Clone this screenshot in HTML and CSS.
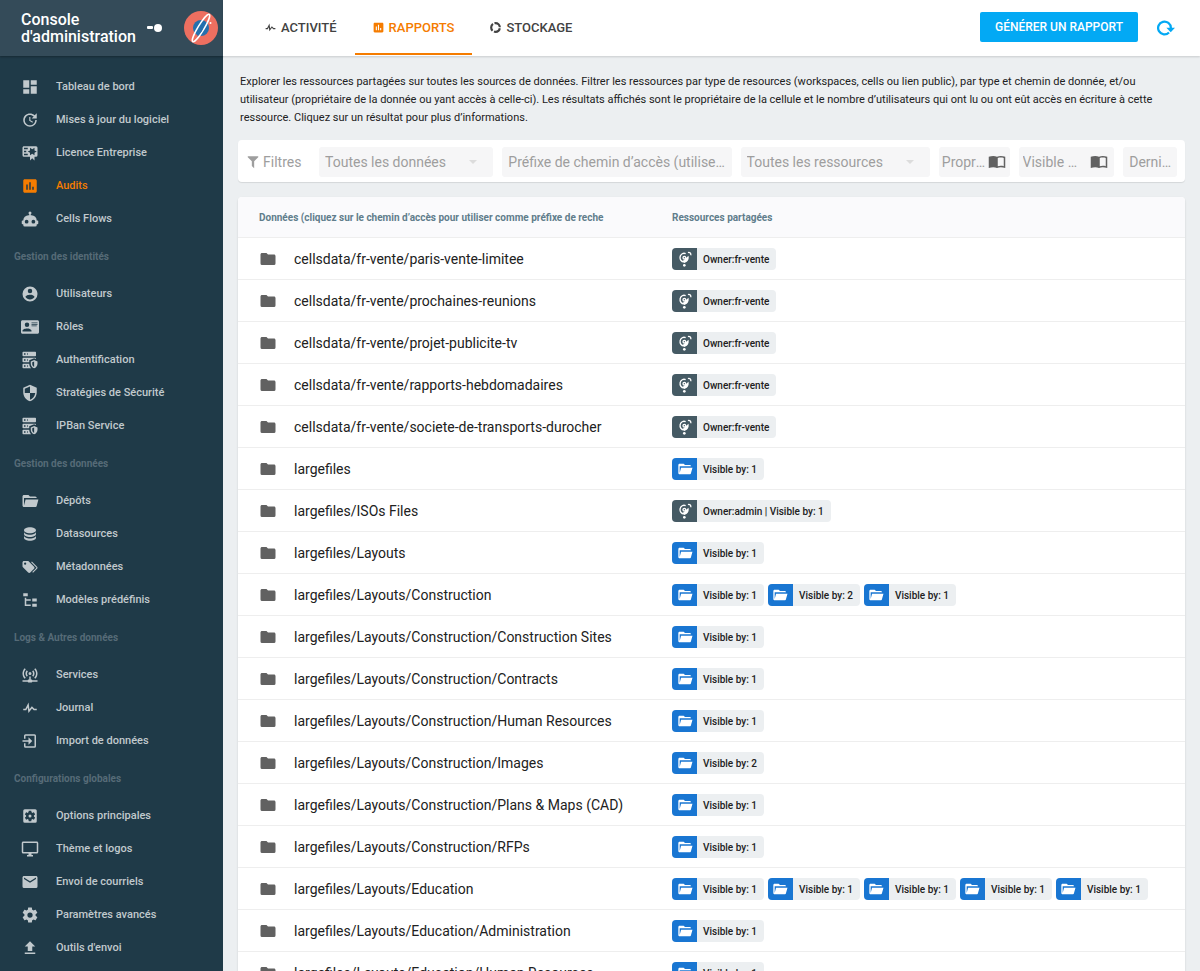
FILE: index.html
```html
<!doctype html>
<html lang="fr">
    <head>
        <meta charset="UTF-8" />
        <meta name="viewport" content="width=device-width, initial-scale=1.0" />
        <title>Console d'administration</title>
        <link rel="stylesheet" href="styles.css">
    </head>
    <body>
        <svg class="sprite" aria-hidden="true">
            <symbol id="i-dashboard" viewBox="0 0 24 24"><path d="M13,3V9H21V3M13,21H21V11H13M3,21H11V15H3M3,13H11V3H3V13Z" /></symbol>
            <symbol id="i-update" viewBox="0 0 24 24"><path d="M21,10.12H14.22L16.96,7.3C14.23,4.6 9.81,4.5 7.08,7.2C4.35,9.91 4.35,14.28 7.08,17C9.81,19.7 14.23,19.7 16.96,17C18.32,15.65 19,14.08 19,12.1H21C21,14.08 20.12,16.65 18.36,18.39C14.85,21.87 9.15,21.87 5.64,18.39C2.14,14.92 2.11,9.28 5.62,5.81C9.13,2.34 14.76,2.34 18.27,5.81L21,3V10.12M12.5,8V12.25L16,14.33L15.28,15.54L11,13V8H12.5Z" /></symbol>
            <symbol id="i-licence" viewBox="0 0 24 24"><path d="M4,3C2.89,3 2,3.89 2,5V15A2,2 0 0,0 4,17H12V22L15,19L18,22V17H20A2,2 0 0,0 22,15V5A2,2 0 0,0 20,3H4M12,5L15,7L18,5V8.5L21,10L18,11.5V15L15,13L12,15V11.5L9,10L12,8.5V5M4,5H9V7H4V5M4,9H7V11H4V9M4,13H9V15H4V13Z" /></symbol>
            <symbol id="i-chart" viewBox="0 0 24 24"><path d="M19,3H5C3.9,3 3,3.9 3,5V19C3,20.1 3.9,21 5,21H19C20.1,21 21,20.1 21,19V5C21,3.9 20.1,3 19,3M9,17H7V10H9V17M13,17H11V7H13V17M17,17H15V13H17V17Z" /></symbol>
            <symbol id="i-robot" viewBox="0 0 24 24"><path d="M12,2A2,2 0 0,1 14,4C14,4.74 13.6,5.39 13,5.73V7H14A7,7 0 0,1 21,14H22A1,1 0 0,1 23,15V18A1,1 0 0,1 22,19H21V20A2,2 0 0,1 19,22H5A2,2 0 0,1 3,20V19H2A1,1 0 0,1 1,18V15A1,1 0 0,1 2,14H3A7,7 0 0,1 10,7H11V5.73C10.4,5.39 10,4.74 10,4A2,2 0 0,1 12,2M7.5,13A2.5,2.5 0 0,0 5,15.5A2.5,2.5 0 0,0 7.5,18A2.5,2.5 0 0,0 10,15.5A2.5,2.5 0 0,0 7.5,13M16.5,13A2.5,2.5 0 0,0 14,15.5A2.5,2.5 0 0,0 16.5,18A2.5,2.5 0 0,0 19,15.5A2.5,2.5 0 0,0 16.5,13Z" /></symbol>
            <symbol id="i-user" viewBox="0 0 24 24"><path d="M12,19.2C9.5,19.2 7.29,17.92 6,16C6.03,14 10,12.9 12,12.9C14,12.9 17.97,14 18,16C16.71,17.92 14.5,19.2 12,19.2M12,5A3,3 0 0,1 15,8A3,3 0 0,1 12,11A3,3 0 0,1 9,8A3,3 0 0,1 12,5M12,2A10,10 0 0,0 2,12A10,10 0 0,0 12,22A10,10 0 0,0 22,12C22,6.47 17.5,2 12,2Z" /></symbol>
            <symbol id="i-card" viewBox="0 0 24 24"><path d="M2,3H22C23.05,3 24,3.95 24,5V19C24,20.05 23.05,21 22,21H2C0.95,21 0,20.05 0,19V5C0,3.95 0.95,3 2,3M14,6V7H22V6H14M14,8V9H22V8H14M14,10V11H21V10H14M8,13.91C6,13.91 2,15 2,17V18H14V17C14,15 10,13.91 8,13.91M8,6A3,3 0 0,0 5,9A3,3 0 0,0 8,12A3,3 0 0,0 11,9A3,3 0 0,0 8,6Z" /></symbol>
            <symbol id="i-server" viewBox="0 0 24 24"><path d="M3,1H19A1,1 0 0,1 20,2V6A1,1 0 0,1 19,7H3A1,1 0 0,1 2,6V2A1,1 0 0,1 3,1M3,9H19A1,1 0 0,1 20,10V10.67L17.5,9.56L11,12.44V15H3A1,1 0 0,1 2,14V10A1,1 0 0,1 3,9M3,17H11C11.06,19.25 12,21.4 13.46,23H3A1,1 0 0,1 2,22V18A1,1 0 0,1 3,17M8,5H9V3H8V5M8,13H9V11H8V13M8,21H9V19H8V21M4,3V5H6V3H4M4,11V13H6V11H4M4,19V21H6V19H4M17.5,12L22,14V17C22,19.78 20.08,22.37 17.5,23C14.92,22.37 13,19.78 13,17V14L17.5,12M17.5,13.94L15,15.06V17.72C15,19.26 16.07,20.7 17.5,21.06V13.94Z" /></symbol>
            <symbol id="i-shield" viewBox="0 0 24 24"><path d="M12,12H19C18.47,16.11 15.72,19.78 12,20.92V12H5V6.3L12,3.19M12,1L3,5V11C3,16.55 6.84,21.73 12,23C17.16,21.73 21,16.55 21,11V5L12,1Z" /></symbol>
            <symbol id="i-folder-open" viewBox="0 0 24 24"><path d="M19,20H4C2.89,20 2,19.1 2,18V6C2,4.89 2.89,4 4,4H10L12,6H19A2,2 0 0,1 21,8H4V18L6.14,10H23.21L20.93,18.5C20.7,19.37 19.92,20 19,20Z" /></symbol>
            <symbol id="i-database" viewBox="0 0 24 24"><path d="M12,3C7.58,3 4,4.79 4,7C4,9.21 7.58,11 12,11C16.42,11 20,9.21 20,7C20,4.79 16.42,3 12,3M4,9V12C4,14.21 7.58,16 12,16C16.42,16 20,14.21 20,12V9C20,11.21 16.42,13 12,13C7.58,13 4,11.21 4,9M4,14V17C4,19.21 7.58,21 12,21C16.42,21 20,19.21 20,17V14C20,16.21 16.42,18 12,18C7.58,18 4,16.21 4,14Z" /></symbol>
            <symbol id="i-tags" viewBox="0 0 24 24"><path d="M5.5,9A1.5,1.5 0 0,0 7,7.5A1.5,1.5 0 0,0 5.5,6A1.5,1.5 0 0,0 4,7.5A1.5,1.5 0 0,0 5.5,9M17.41,11.58C17.77,11.94 18,12.44 18,13C18,13.55 17.78,14.05 17.41,14.41L12.41,19.41C12.05,19.77 11.55,20 11,20C10.45,20 9.95,19.78 9.58,19.41L2.59,12.42C2.22,12.05 2,11.55 2,11V6C2,4.89 2.89,4 4,4H9C9.55,4 10.05,4.22 10.41,4.58L17.41,11.58M13.54,5.71L14.54,4.71L21.41,11.58C21.78,11.94 22,12.45 22,13C22,13.55 21.78,14.05 21.42,14.41L16.04,19.79L15.04,18.79L20.75,13L13.54,5.71Z" /></symbol>
            <symbol id="i-tree" viewBox="0 0 24 24"><path d="M3,3H9V7H3V3M15,10H21V14H15V10M15,17H21V21H15V17M13,13H7V18H13V20H5V9H7V11H13V13Z" /></symbol>
            <symbol id="i-network" viewBox="0 0 24 24"><path d="M4.93,2.93C3.12,4.74 2,7.24 2,10C2,12.76 3.12,15.26 4.93,17.07L6.34,15.66C4.89,14.22 4,12.22 4,10C4,7.79 4.89,5.78 6.34,4.34L4.93,2.93M19.07,2.93L17.66,4.34C19.11,5.78 20,7.79 20,10C20,12.22 19.11,14.22 17.66,15.66L19.07,17.07C20.88,15.26 22,12.76 22,10C22,7.24 20.88,4.74 19.07,2.93M7.76,5.76C6.67,6.85 6,8.35 6,10C6,11.65 6.67,13.15 7.76,14.24L9.17,12.83C8.45,12.11 8,11.11 8,10C8,8.89 8.45,7.89 9.17,7.17L7.76,5.76M16.24,5.76L14.83,7.17C15.55,7.89 16,8.89 16,10C16,11.11 15.55,12.11 14.83,12.83L16.24,14.24C17.33,13.15 18,11.65 18,10C18,8.35 17.33,6.85 16.24,5.76M12,8A2,2 0 0,0 10,10A2,2 0 0,0 12,12A2,2 0 0,0 14,10A2,2 0 0,0 12,8M11,14V18H10A1,1 0 0,0 9,19H2V21H9A1,1 0 0,0 10,22H14A1,1 0 0,0 15,21H22V19H15A1,1 0 0,0 14,18H13V14H11Z" /></symbol>
            <symbol id="i-pulse" viewBox="0 0 24 24"><path d="M3,13H5.79L10.1,4.79L11.28,13.75L14.5,9.66L17.83,13H21V15H17L14.67,12.67L9.92,18.73L8.94,11.31L7,15H3V13Z" /></symbol>
            <symbol id="i-import" viewBox="0 0 24 24"><path d="M19,3H6A2,2 0 0,0 4,5V9H6V5H18V19H6V15H4V19A2,2 0 0,0 6,21H18A2,2 0 0,0 20,19V5A2,2 0 0,0 18,3M10,17L15,12L10,7V11H2V13H10V17Z" /></symbol>
            <symbol id="i-options" viewBox="0 0 24 24"><path d="M19,3H5A2,2 0 0,0 3,5V19A2,2 0 0,0 5,21H19A2,2 0 0,0 21,19V5A2,2 0 0,0 19,3M17.25,12C17.25,12.23 17.23,12.46 17.2,12.68L18.68,13.84C18.81,13.95 18.85,14.13 18.76,14.29L17.36,16.71C17.27,16.86 17.09,16.92 16.93,16.86L15.19,16.16C14.83,16.44 14.43,16.67 14,16.85L13.74,18.7C13.72,18.87 13.57,19 13.4,19H10.6C10.43,19 10.28,18.87 10.26,18.7L10,16.85C9.57,16.67 9.17,16.44 8.81,16.16L7.07,16.86C6.91,16.92 6.73,16.86 6.64,16.71L5.24,14.29C5.15,14.13 5.19,13.95 5.32,13.84L6.8,12.68C6.77,12.46 6.75,12.23 6.75,12C6.75,11.77 6.77,11.54 6.8,11.32L5.32,10.16C5.19,10.05 5.15,9.86 5.24,9.71L6.64,7.29C6.73,7.13 6.91,7.07 7.07,7.13L8.81,7.84C9.17,7.56 9.57,7.32 10,7.15L10.26,5.29C10.28,5.13 10.43,5 10.6,5H13.4C13.57,5 13.72,5.13 13.74,5.29L14,7.15C14.43,7.32 14.83,7.56 15.19,7.84L16.93,7.13C17.09,7.07 17.27,7.13 17.36,7.29L18.76,9.71C18.85,9.86 18.81,10.05 18.68,10.16L17.2,11.32C17.23,11.54 17.25,11.77 17.25,12M12,10A2,2 0 0,0 10,12A2,2 0 0,0 12,14A2,2 0 0,0 14,12A2,2 0 0,0 12,10Z" /></symbol>
            <symbol id="i-monitor" viewBox="0 0 24 24"><path d="M21,16H3V4H21M21,2H3C1.89,2 1,2.89 1,4V16A2,2 0 0,0 3,18H10V20H8V22H16V20H14V18H21A2,2 0 0,0 23,16V4C23,2.89 22.1,2 21,2Z" /></symbol>
            <symbol id="i-mail" viewBox="0 0 24 24"><path d="M20,8L12,13L4,8V6L12,11L20,6M20,4H4C2.89,4 2,4.89 2,6V18A2,2 0 0,0 4,20H20A2,2 0 0,0 22,18V6C22,4.89 21.1,4 20,4Z" /></symbol>
            <symbol id="i-gear" viewBox="0 0 24 24"><path d="M12,15.5A3.5,3.5 0 0,1 8.5,12A3.5,3.5 0 0,1 12,8.5A3.5,3.5 0 0,1 15.5,12A3.5,3.5 0 0,1 12,15.5M19.43,12.97C19.47,12.65 19.5,12.33 19.5,12C19.5,11.67 19.47,11.34 19.43,11L21.54,9.37C21.73,9.22 21.78,8.95 21.66,8.73L19.66,5.27C19.54,5.05 19.27,4.96 19.05,5.05L16.56,6.05C16.04,5.66 15.5,5.32 14.87,5.07L14.5,2.42C14.46,2.18 14.25,2 14,2H10C9.75,2 9.54,2.18 9.5,2.42L9.13,5.07C8.5,5.32 7.96,5.66 7.44,6.05L4.95,5.05C4.73,4.96 4.46,5.05 4.34,5.27L2.34,8.73C2.21,8.95 2.27,9.22 2.46,9.37L4.57,11C4.53,11.34 4.5,11.67 4.5,12C4.5,12.33 4.53,12.65 4.57,12.97L2.46,14.63C2.27,14.78 2.21,15.05 2.34,15.27L4.34,18.73C4.46,18.95 4.73,19.03 4.95,18.95L7.44,17.94C7.96,18.34 8.5,18.68 9.13,18.93L9.5,21.58C9.54,21.82 9.75,22 10,22H14C14.25,22 14.46,21.82 14.5,21.58L14.87,18.93C15.5,18.67 16.04,18.34 16.56,17.94L19.05,18.95C19.27,19.03 19.54,18.95 19.66,18.73L21.66,15.27C21.78,15.05 21.73,14.78 21.54,14.63L19.43,12.97Z" /></symbol>
            <symbol id="i-upload" viewBox="0 0 24 24"><path d="M9,16V10H5L12,3L19,10H15V16H9M5,20V18H19V20H5Z" /></symbol>
            <symbol id="i-filter" viewBox="0 0 24 24"><path d="M3,2H21V4H20.92L14,10.92V22.91L10,18.91V10.91L3.09,4H3V2Z" /></symbol>
            <symbol id="i-folder" viewBox="0 0 24 24"><path d="M10,4H4C2.89,4 2,4.89 2,6V18A2,2 0 0,0 4,20H20A2,2 0 0,0 22,18V8C22,6.89 21.1,6 20,6H12L10,4Z" /></symbol>
            <symbol id="i-donut" viewBox="0 0 24 24"><circle cx="12" cy="12" r="8" fill="none" stroke="currentColor" stroke-width="4" pathLength="12" stroke-dasharray="3.3 0.7" stroke-dashoffset="-0.35" /></symbol>
            <symbol id="i-book" viewBox="0 0 24 24"><path d="M12,5C10.5,4.2 8.7,4 7,4C5,4 3,4.2 1,5V20C3,19.3 5,19 7,19C8.7,19 10.5,19.2 12,20C13.5,19.2 15.3,19 17,19C19,19 21,19.3 23,20V5C21,4.2 19,4 17,4C15.3,4 13.5,4.2 12,5M21,17.5C19.8,17.1 18.3,17 17,17C15.7,17 14.2,17.3 13,17.8V6.5C14.2,6.1 15.7,6 17,6C18.3,6 19.8,6.1 21,6.5V17.5Z" /></symbol>
            <symbol id="i-reload" viewBox="0 0 24 24">
                <path d="M16,18A8.5,8.5 0 1 1 18.5,12" fill="none" stroke="currentColor" stroke-width="3" />
                <path d="M12.5,11.5H24L18.3,17.5Z" />
            </symbol>
            <symbol id="i-cell" viewBox="0 0 24 24">
                <path d="M13,4A6,6.5 0 1 0 16.5,9L12,13" class="stroke" />
                <circle cx="11" cy="10" r="2" class="stroke" />
                <path d="M11,17.5L15,15L17,10L13,12L8,15Z" />
                <circle cx="11" cy="21.5" r="2" />
                <path d="M16.5,2.5A3,3 0 0 1 20.5,6.5" class="stroke" />
            </symbol>
        </svg>

        <div class="app">
            <aside class="sidebar">
                <header class="brand">
                    <h1>Console d'administration</h1>
                    <button class="pin" type="button" aria-label="Réduire le menu">
                        <svg viewBox="0 0 16 10"><rect x="0" y="3" width="6" height="3" rx="1" /><circle cx="11" cy="5" r="4" /></svg>
                    </button>
                    <svg class="logo" viewBox="0 0 34 34">
                        <circle cx="17" cy="17" r="17" fill="#ed6f60" />
                        <circle cx="17" cy="17" r="8" fill="#2470ae" />
                        <ellipse cx="17" cy="17" rx="3" ry="16" transform="rotate(31 17 17)" fill="none" stroke="#fff" stroke-width="1.5" />
                        <path d="M16,18L21,10L18,20L13,26Z" fill="#2470ae" />
                        <circle cx="26.5" cy="12" r="1" fill="#fff" />
                    </svg>
                </header>
                <nav class="menu">
                    <a href="#"><svg class="icon"><use href="#i-dashboard" /></svg>Tableau de bord</a>
                    <a href="#"><svg class="icon"><use href="#i-update" /></svg>Mises à jour du logiciel</a>
                    <a href="#"><svg class="icon"><use href="#i-licence" /></svg>Licence Entreprise</a>
                    <a href="#" class="active"><svg class="icon"><use href="#i-chart" /></svg>Audits</a>
                    <a href="#"><svg class="icon"><use href="#i-robot" /></svg>Cells Flows</a>
                    <h2>Gestion des identités</h2>
                    <a href="#"><svg class="icon"><use href="#i-user" /></svg>Utilisateurs</a>
                    <a href="#"><svg class="icon"><use href="#i-card" /></svg>Rôles</a>
                    <a href="#"><svg class="icon"><use href="#i-server" /></svg>Authentification</a>
                    <a href="#"><svg class="icon"><use href="#i-shield" /></svg>Stratégies de Sécurité</a>
                    <a href="#"><svg class="icon"><use href="#i-server" /></svg>IPBan Service</a>
                    <h2>Gestion des données</h2>
                    <a href="#"><svg class="icon"><use href="#i-folder-open" /></svg>Dépôts</a>
                    <a href="#"><svg class="icon"><use href="#i-database" /></svg>Datasources</a>
                    <a href="#"><svg class="icon"><use href="#i-tags" /></svg>Métadonnées</a>
                    <a href="#"><svg class="icon"><use href="#i-tree" /></svg>Modèles prédéfinis</a>
                    <h2>Logs &amp; Autres données</h2>
                    <a href="#"><svg class="icon"><use href="#i-network" /></svg>Services</a>
                    <a href="#"><svg class="icon"><use href="#i-pulse" /></svg>Journal</a>
                    <a href="#"><svg class="icon"><use href="#i-import" /></svg>Import de données</a>
                    <h2>Configurations globales</h2>
                    <a href="#"><svg class="icon"><use href="#i-options" /></svg>Options principales</a>
                    <a href="#"><svg class="icon"><use href="#i-monitor" /></svg>Thème et logos</a>
                    <a href="#"><svg class="icon"><use href="#i-mail" /></svg>Envoi de courriels</a>
                    <a href="#"><svg class="icon"><use href="#i-gear" /></svg>Paramètres avancés</a>
                    <a href="#"><svg class="icon"><use href="#i-upload" /></svg>Outils d'envoi</a>
                </nav>
            </aside>

            <div class="page">
                <header class="topbar">
                    <div class="tabs">
                        <button type="button" class="tab"><svg><use href="#i-pulse" /></svg>ACTIVITÉ</button>
                        <button type="button" class="tab selected"><svg><use href="#i-chart" /></svg>RAPPORTS</button>
                        <button type="button" class="tab"><svg><use href="#i-donut" /></svg>STOCKAGE</button>
                    </div>
                    <button type="button" class="generate">GÉNÉRER UN RAPPORT</button>
                    <button type="button" class="reload" aria-label="Recharger"><svg><use href="#i-reload" /></svg></button>
                </header>

                <main class="content">
                    <p class="intro">Explorer les ressources partagées sur toutes les sources de données. Filtrer les ressources par type de resources (workspaces, cells ou lien public), par type et chemin de donnée, et/ou utilisateur (propriétaire de la donnée ou yant accès à celle-ci). Les résultats affichés sont le propriétaire de la cellule et le nombre d’utilisateurs qui ont lu ou ont eût accès en écriture à cette ressource. Cliquez sur un résultat pour plus d’informations.</p>

                    <form class="filters">
                        <span class="filters-title"><svg><use href="#i-filter" /></svg>Filtres</span>
                        <div class="field data-type">
                            <select aria-label="Type de données"><option>Toutes les données</option></select>
                        </div>
                        <div class="field prefix">
                            <input type="text" aria-label="Préfixe de chemin d’accès" placeholder="Préfixe de chemin d’accès (utilisez la liste)" />
                        </div>
                        <div class="field resource-type">
                            <select aria-label="Type de ressources"><option>Toutes les ressources</option></select>
                        </div>
                        <div class="field owner">
                            <input type="text" aria-label="Propriétaire" placeholder="Propriétaire" />
                            <svg><use href="#i-book" /></svg>
                        </div>
                        <div class="field visible">
                            <input type="text" aria-label="Visible par" placeholder="Visible par l’utilisateur" />
                            <svg><use href="#i-book" /></svg>
                        </div>
                        <div class="field last">
                            <input type="text" aria-label="Dernière mise à jour" placeholder="Dernière mise à jour" />
                        </div>
                    </form>

                    <table class="report">
                        <thead>
                            <tr>
                                <th class="col-path">Données (cliquez sur le chemin d’accès pour utiliser comme préfixe de reche</th>
                                <th>Ressources partagées</th>
                            </tr>
                        </thead>
                        <tbody id="rows"></tbody>
                    </table>
                </main>
            </div>
        </div>

        <script>
            const rows = [
                ["cellsdata/fr-vente/paris-vente-limitee", ["Owner:fr-vente"]],
                ["cellsdata/fr-vente/prochaines-reunions", ["Owner:fr-vente"]],
                ["cellsdata/fr-vente/projet-publicite-tv", ["Owner:fr-vente"]],
                ["cellsdata/fr-vente/rapports-hebdomadaires", ["Owner:fr-vente"]],
                ["cellsdata/fr-vente/societe-de-transports-durocher", ["Owner:fr-vente"]],
                ["largefiles", ["Visible by: 1"]],
                ["largefiles/ISOs Files", ["Owner:admin | Visible by: 1"]],
                ["largefiles/Layouts", ["Visible by: 1"]],
                ["largefiles/Layouts/Construction", ["Visible by: 1", "Visible by: 2", "Visible by: 1"]],
                ["largefiles/Layouts/Construction/Construction Sites", ["Visible by: 1"]],
                ["largefiles/Layouts/Construction/Contracts", ["Visible by: 1"]],
                ["largefiles/Layouts/Construction/Human Resources", ["Visible by: 1"]],
                ["largefiles/Layouts/Construction/Images", ["Visible by: 2"]],
                ["largefiles/Layouts/Construction/Plans & Maps (CAD)", ["Visible by: 1"]],
                ["largefiles/Layouts/Construction/RFPs", ["Visible by: 1"]],
                ["largefiles/Layouts/Education", ["Visible by: 1", "Visible by: 1", "Visible by: 1", "Visible by: 1", "Visible by: 1"]],
                ["largefiles/Layouts/Education/Administration", ["Visible by: 1"]],
                ["largefiles/Layouts/Education/Human Resources", ["Visible by: 1"]],
            ];

            function chip(text) {
                // cells have an owner, workspaces only list who can see them
                const isCell = text.startsWith("Owner");
                return `<a href="#" class="chip ${isCell ? "cell" : "workspace"}">
                    <span class="chip-icon"><svg><use href="#${isCell ? "i-cell" : "i-folder-open"}" /></svg></span>
                    <span class="chip-text">${text}</span>
                </a>`;
            }

            document.getElementById("rows").innerHTML = rows
                .map(
                    ([path, chips]) => `<tr>
                        <td><a href="#" class="path"><svg class="icon"><use href="#i-folder" /></svg>${path.replace("&", "&amp;")}</a></td>
                        <td><div class="chips">${chips.map(chip).join("")}</div></td>
                    </tr>`,
                )
                .join("");
        </script>
    </body>
</html>
```
FILE: styles.css
```css
* {
    box-sizing: border-box;
}
body {
    margin: 0;
    font-family: Roboto, "Liberation Sans", sans-serif;
    color: #212121;
    background: #eceff1;
}
a {
    color: inherit;
    text-decoration: none;
}
button {
    font-family: inherit;
    border: none;
    background: none;
    padding: 0;
    cursor: pointer;
}
svg {
    fill: currentColor;
    fill-rule: evenodd;
    flex-shrink: 0;
}
.sprite {
    display: none;
}
.icon {
    width: 18px;
    height: 18px;
}
.stroke {
    fill: none;
    stroke: currentColor;
    stroke-width: 2;
}
.app {
    display: flex;
    height: 100vh;
    overflow: hidden;
}

/* sidebar */
.sidebar {
    width: 223px;
    flex-shrink: 0;
    background: #1f3a48;
    color: #c1c9cd;
}
.brand {
    display: flex;
    align-items: center;
    height: 56px;
    padding: 0 5px 0 21px;
    background: #344b59;
    color: #fff;
    box-shadow: 0 1px 2px rgba(0, 0, 0, 0.3);
}
.brand h1 {
    flex: 1;
    margin: 0;
    font-size: 16px;
    line-height: 17px;
    font-weight: 500;
}
.pin {
    color: inherit;
    margin-right: 21px;
}
.pin svg {
    display: block;
    width: 16px;
    height: 10px;
}
.logo {
    width: 34px;
    height: 34px;
}
.menu {
    padding-top: 14px;
}
.menu a {
    display: flex;
    align-items: center;
    gap: 17px;
    height: 33px;
    padding-left: 21px;
    font-size: 11px;
    font-weight: 500;
}
.menu .active {
    color: #f57c00;
}
.menu h2 {
    margin: 0;
    padding: 2px 0 0 14px;
    font-size: 10px;
    line-height: 40px;
    font-weight: 700;
    color: #566b77;
}

/* top bar */
.page {
    flex: 1;
    min-width: 0;
    display: flex;
    flex-direction: column;
}
.topbar {
    display: flex;
    align-items: center;
    height: 56px;
    flex-shrink: 0;
    padding-right: 25px;
    background: #fff;
    box-shadow: 0 1px 2px rgba(0, 0, 0, 0.15);
}
.tabs {
    flex: 1;
    display: flex;
    align-self: stretch;
    padding: 0 0 1px 24px;
}
.tab {
    display: flex;
    align-items: center;
    gap: 4px;
    padding: 2px 18px 0 17px;
    border-bottom: 2px solid transparent;
    font-size: 13px;
    font-weight: 500;
    color: #424242;
}
.tab svg {
    width: 13px;
    height: 13px;
}
.tab.selected {
    color: #f57c00;
    border-color: #f57c00;
}
.generate {
    height: 30px;
    margin-bottom: 2px;
    padding: 0 15px;
    border-radius: 2px;
    background: #03a9f4;
    color: #fff;
    font-size: 12px;
    font-weight: 500;
}
.reload {
    margin-left: 19px;
    color: #03a9f4;
}
.reload svg {
    display: block;
    width: 18px;
    height: 18px;
}

/* content */
.content {
    flex: 1;
    padding: 17px 15px 0;
    overflow: hidden;
}
.intro {
    margin: 0;
    padding: 0 2px;
    font-size: 11px;
    line-height: 18px;
}
.filters {
    display: flex;
    align-items: center;
    gap: 9px;
    height: 42px;
    margin: 13px 0 15px;
    padding: 1px 8px 0;
    border-radius: 4px;
    background: #fff;
    box-shadow: 0 1px 1px rgba(0, 0, 0, 0.1);
    color: #9e9e9e;
    font-size: 14px;
}
.filters-title {
    display: flex;
    align-items: center;
    gap: 3px;
    width: 64px;
}
.filters-title svg {
    width: 14px;
    height: 14px;
}
.field {
    display: flex;
    align-items: center;
    height: 30px;
    min-width: 0;
    padding: 1px 6px 0;
    border-radius: 3px;
    background: #f6f6f7;
}
.field input,
.field select {
    flex: 1;
    width: 100%;
    min-width: 0;
    padding: 0;
    border: none;
    outline: none;
    appearance: none;
    background: none;
    font: inherit;
    color: inherit;
    text-overflow: ellipsis;
}
.field input::placeholder {
    color: #9e9e9e;
}
.field svg {
    width: 18px;
    height: 18px;
    color: #616161;
}
.data-type {
    flex: 163;
}
.prefix {
    flex: 218;
}
.resource-type {
    flex: 178;
}
.data-type::after,
.resource-type::after {
    content: "";
    margin-right: 10px;
    border: 4px solid transparent;
    border-top-color: #dcdcdc;
    border-bottom: none;
}
.owner {
    flex: 64;
    padding: 1px 4px 0 3px;
}
.visible {
    flex: 86;
    gap: 10px;
    padding-left: 4px;
}
.last {
    flex: 46;
    padding-right: 2px;
}

/* report table */
.report {
    width: 100%;
    table-layout: fixed;
    border-collapse: separate;
    border-spacing: 0;
    border-radius: 4px;
    background: #fff;
    box-shadow: 0 1px 2px rgba(0, 0, 0, 0.15);
}
.report th {
    height: 41px;
    padding: 0 21px;
    border-bottom: 1px solid #eeeeee;
    background: #fafafc;
    color: #607d8b;
    font-size: 10px;
    font-weight: 700;
    text-align: left;
    white-space: nowrap;
}
.report th:first-child {
    border-top-left-radius: 4px;
}
.report th:last-child {
    border-top-right-radius: 4px;
}
.col-path {
    width: 413px;
}
.report td {
    height: 42px;
    padding: 0 21px;
    border-bottom: 1px solid #eeeeee;
}
.path {
    display: flex;
    align-items: center;
    gap: 17px;
    font-size: 14px;
    white-space: nowrap;
}
.path .icon {
    color: #616161;
}
.chips {
    display: flex;
    gap: 4px;
}
.chip {
    display: flex;
    height: 22px;
    border-radius: 4px;
    overflow: hidden;
    background: #eceff1;
    font-size: 10px;
    font-weight: 500;
    line-height: 23px;
    white-space: nowrap;
}
.chip-icon {
    display: flex;
    align-items: center;
    justify-content: center;
    width: 25px;
    color: #fff;
    background: #455a64;
}
.workspace .chip-icon {
    background: #1976d2;
}
.chip-icon svg {
    width: 16px;
    height: 16px;
}
.chip-text {
    padding: 0 7px 0 6px;
}
```
